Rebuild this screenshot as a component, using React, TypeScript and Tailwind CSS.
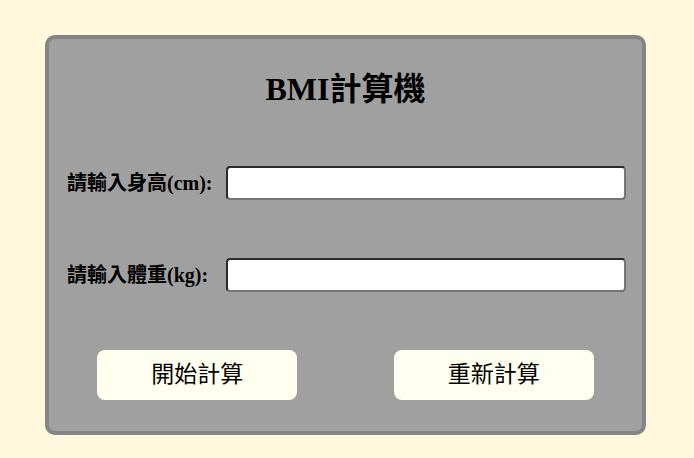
import React from "react";

export default function App() {
  const serif = "font-['Liberation_Serif','Noto_Sans_CJK_TC',serif]";
  return (
    <div className="min-h-screen h-[458px] bg-[#fff8dc] pt-[35px] pl-[45px]">
      <div className="w-[601px] h-[400px] box-border border-4 border-[#858585] rounded-[10px] bg-[#a0a0a0] flex flex-col">
        <h1
          className={`${serif} mt-[32px] text-center text-[32px] leading-[36px] font-bold text-black`}
        >
          BMI計算機
        </h1>
        <div className="mt-[59px] flex items-center pl-[18px]">
          <label className={`${serif} w-[159px] text-[20px] font-bold text-black leading-[24px]`}>
            請輸入身高(cm):
          </label>
          <input
            type="text"
            className="w-[400px] h-[34px] bg-white rounded-[4px] border-2 border-t-[#2b2b2b] border-l-[#2b2b2b] border-b-[#767676] border-r-[#767676] outline-none"
          />
        </div>
        <div className="mt-[58px] flex items-center pl-[18px]">
          <label className={`${serif} w-[159px] text-[20px] font-bold text-black leading-[24px]`}>
            請輸入體重(kg):
          </label>
          <input
            type="text"
            className="w-[400px] h-[34px] bg-white rounded-[4px] border-2 border-t-[#2b2b2b] border-l-[#2b2b2b] border-b-[#767676] border-r-[#767676] outline-none"
          />
        </div>
        <div className="mt-[58px] flex justify-around">
          <button className="w-[200px] h-[50px] pb-[6px] bg-[#fffff0] rounded-[8px] text-[23px] leading-[30px] text-black font-['Noto_Sans_CJK_TC',sans-serif]">
            開始計算
          </button>
          <button className="w-[200px] h-[50px] pb-[6px] bg-[#fffff0] rounded-[8px] text-[23px] leading-[30px] text-black font-['Noto_Sans_CJK_TC',sans-serif]">
            重新計算
          </button>
        </div>
      </div>
    </div>
  );
}
